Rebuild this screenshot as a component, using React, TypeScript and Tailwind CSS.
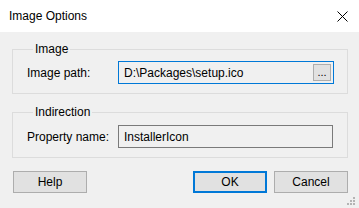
import React from 'react';

const font = { fontFamily: '"Liberation Sans", Arial, sans-serif' };

const Grip: React.FC = () => (
    <svg width="9" height="9" viewBox="0 0 9 9" className="absolute right-[3px] bottom-[2px]">
        {[
            [6, 0], [3, 3], [6, 3], [0, 6], [3, 6], [6, 6]
        ].map(([x, y], i) => (
            <rect key={i} x={x} y={y} width="2" height="2" fill="#b4b4b4" />
        ))}
    </svg>
);

const App: React.FC = () => {
    return (
        <div className="relative w-[359px] h-[208px] bg-[#f0f0f0] text-[12px] text-black overflow-hidden" style={font}>
            {/* Title bar */}
            <div className="h-[32px] bg-white flex items-center justify-between pl-[9px] pr-[11px]">
                <span className="text-[12px] leading-none">Image Options</span>
                <svg width="11" height="11" viewBox="0 0 11 11">
                    <path d="M0.5 0.5 L10.5 10.5 M10.5 0.5 L0.5 10.5" stroke="#000" strokeWidth="1" />
                </svg>
            </div>

            <div className="pl-[12px] pr-[11px]">
                {/* Image group */}
                <fieldset className="mt-[10px] border border-[#dcdcdc] pl-[14px] pr-[13px] pt-[5px] pb-[9px]">
                    <legend className="ml-[6px] px-[2px] leading-[14px]">Image</legend>
                    <div className="flex items-center">
                        <span className="w-[91px]">Image path:</span>
                        <div className="w-[216px] h-[23px] border border-[#0078d7] bg-[#f0f0f0] flex items-center justify-between pl-[5px] pr-[2px]">
                            <span>D:\Packages\setup.ico</span>
                            <button className="w-[18px] h-[17px] border border-[#adadad] bg-[#e1e1e1] flex items-end justify-center pb-[2px] leading-none text-[11px]">...</button>
                        </div>
                    </div>
                </fieldset>

                {/* Indirection group */}
                <fieldset className="mt-[11px] border border-[#dcdcdc] pl-[14px] pr-[13px] pt-[6px] pb-[9px]">
                    <legend className="ml-[6px] px-[2px] leading-[14px]">Indirection</legend>
                    <div className="flex items-center">
                        <span className="w-[91px]">Property name:</span>
                        <div className="w-[215px] h-[23px] border border-[#7a7a7a] bg-[#f0f0f0] flex items-center pl-[5px]">
                            <span>InstallerIcon</span>
                        </div>
                    </div>
                </fieldset>

                {/* Buttons */}
                <div className="mt-[13px] flex items-center">
                    <button className="ml-[1px] w-[74px] h-[22px] border border-[#adadad] bg-[#e1e1e1]">Help</button>
                    <div className="ml-auto flex gap-[7px]">
                        <button className="w-[74px] h-[22px] border-2 border-[#0078d7] bg-[#e1e1e1]">OK</button>
                        <button className="w-[74px] h-[22px] border border-[#adadad] bg-[#e1e1e1]">Cancel</button>
                    </div>
                </div>
            </div>

            <Grip />
        </div>
    );
};

export default App;
